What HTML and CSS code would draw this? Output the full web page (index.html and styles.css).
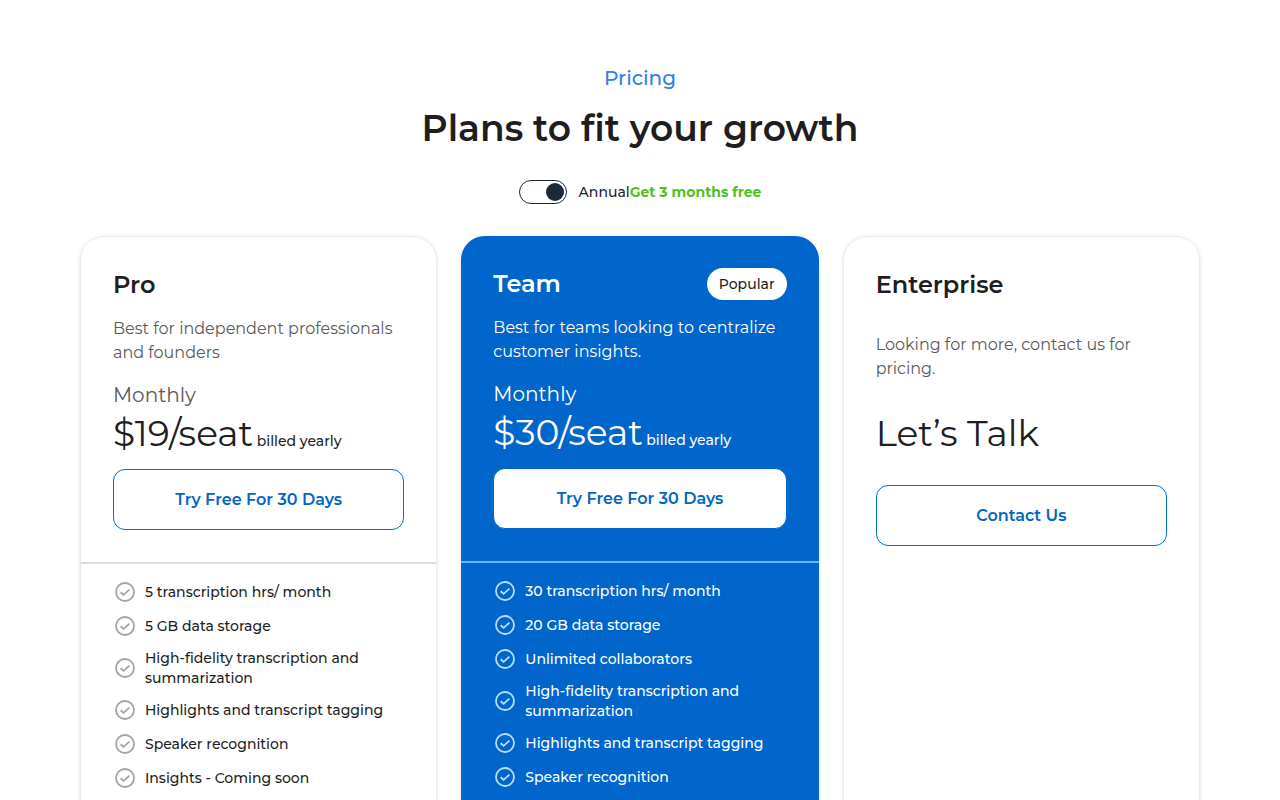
FILE: index.html
```html
<!DOCTYPE html>
<html lang="en">
<head>
    <meta charset="UTF-8">
    <meta name="viewport" content="width=device-width, initial-scale=1.0">
    <title>Pricing</title>
    <link rel="stylesheet" href="styles.css">
</head>
<body>
    <!-- check icon shared by all the feature lists -->
    <svg class="sprite" aria-hidden="true">
        <symbol id="check" viewBox="0 0 24 24">
            <circle cx="12" cy="12" r="9" />
            <path d="M7.6 12.2l3 2.6 5.8-5.2" />
        </symbol>
    </svg>

    <main class="pricing">
        <header class="heading">
            <p class="eyebrow">Pricing</p>
            <h1>Plans to fit your growth</h1>
            <div class="billing">
                <input type="checkbox" class="switch" id="annual" checked>
                <label for="annual">Annual<span class="offer">Get 3 months free</span></label>
            </div>
        </header>

        <div class="plans">
            <section class="plan">
                <div class="plan-top">
                    <div class="plan-name">
                        <h2>Pro</h2>
                    </div>
                    <p class="desc">Best for independent professionals and founders</p>
                    <p class="period">Monthly</p>
                    <p class="price">$19/seat <span class="billed">billed yearly</span></p>
                    <button type="button" class="btn">Try Free For 30 Days</button>
                </div>
                <ul class="features">
                    <li><svg class="icon"><use href="#check" /></svg>5 transcription hrs/ month</li>
                    <li><svg class="icon"><use href="#check" /></svg>5 GB data storage</li>
                    <li><svg class="icon"><use href="#check" /></svg>High-fidelity transcription and summarization</li>
                    <li><svg class="icon"><use href="#check" /></svg>Highlights and transcript tagging</li>
                    <li><svg class="icon"><use href="#check" /></svg>Speaker recognition</li>
                    <li><svg class="icon"><use href="#check" /></svg>Insights - Coming soon</li>
                </ul>
            </section>

            <section class="plan plan-team">
                <div class="plan-top">
                    <div class="plan-name">
                        <h2>Team</h2>
                        <span class="badge">Popular</span>
                    </div>
                    <p class="desc">Best for teams looking to centralize customer insights.</p>
                    <p class="period">Monthly</p>
                    <p class="price">$30/seat <span class="billed">billed yearly</span></p>
                    <button type="button" class="btn">Try Free For 30 Days</button>
                </div>
                <ul class="features">
                    <li><svg class="icon"><use href="#check" /></svg>30 transcription hrs/ month</li>
                    <li><svg class="icon"><use href="#check" /></svg>20 GB data storage</li>
                    <li><svg class="icon"><use href="#check" /></svg>Unlimited collaborators</li>
                    <li><svg class="icon"><use href="#check" /></svg>High-fidelity transcription and summarization</li>
                    <li><svg class="icon"><use href="#check" /></svg>Highlights and transcript tagging</li>
                    <li><svg class="icon"><use href="#check" /></svg>Speaker recognition</li>
                </ul>
            </section>

            <section class="plan plan-enterprise">
                <div class="plan-top">
                    <div class="plan-name">
                        <h2>Enterprise</h2>
                    </div>
                    <p class="desc">Looking for more, contact us for pricing.</p>
                    <p class="price">Let’s Talk</p>
                    <button type="button" class="btn">Contact Us</button>
                </div>
            </section>
        </div>
    </main>
</body>
</html>
```

FILE: styles.css
```css
* {
    box-sizing: border-box;
}
body {
    margin: 0;
    font-family: Montserrat, Inter, sans-serif;
    color: #1e1e1e;
    background-color: white;
}
h1, h2, p, ul {
    margin: 0;
    padding: 0;
}
.sprite {
    display: none;
}
.pricing {
    max-width: 1184px;
    margin: 0 auto;
    padding: 64px 32px 0;
}

/* heading */
.heading {
    display: flex;
    flex-direction: column;
    align-items: center;
    text-align: center;
}
.eyebrow {
    font-size: 20px;
    line-height: 28px;
    font-weight: 500;
    color: #2f80ed;
}
h1 {
    margin-top: 12px;
    font-size: 36px;
    line-height: 48px;
    font-weight: 600;
}
.billing {
    display: flex;
    align-items: center;
    gap: 12px;
    margin: 28px 0 32px;
    font-size: 14px;
    line-height: 24px;
    font-weight: 500;
}
.offer {
    font-weight: 700;
    color: #52c01a;
}
.switch {
    appearance: none;
    display: flex;
    width: 48px;
    height: 24px;
    margin: 0;
    padding: 2px;
    border: 1px solid #1c2938;
    border-radius: 12px;
    cursor: pointer;
}
.switch::before {
    content: "";
    width: 18px;
    height: 18px;
    border-radius: 50%;
    background-color: #1c2938;
}
.switch:checked {
    justify-content: flex-end;
}

/* plans */
.plans {
    display: grid;
    grid-template-columns: repeat(3, 1fr);
    gap: 24px;
}
.plan {
    border: 1px solid #ebebeb;
    border-radius: 24px;
    box-shadow: 0 1px 4px rgba(0, 0, 0, 0.12);
}
.plan-top {
    padding: 32px;
}
.plan-name {
    display: flex;
    justify-content: space-between;
    align-items: center;
    height: 32px;
}
h2 {
    font-size: 24px;
    line-height: 32px;
    font-weight: 600;
}
.desc {
    margin-top: 16px;
    font-size: 16px;
    line-height: 24px;
    color: #5a5a5a;
}
.period {
    margin-top: 16px;
    font-size: 20px;
    line-height: 28px;
    color: #5a5a5a;
}
.price {
    font-size: 36px;
    line-height: 48px;
    white-space: nowrap;
}
.billed {
    margin-left: -6px;
    font-size: 14px;
    font-weight: 500;
}
.btn {
    display: block;
    width: 100%;
    height: 61px;
    margin-top: 4px;
    border: 1px solid #0070c0;
    border-radius: 12px;
    background-color: white;
    font: inherit;
    font-size: 16px;
    font-weight: 600;
    color: #0066c3;
    cursor: pointer;
}
.btn:hover {
    background-color: #eef6ff;
}
.features {
    display: flex;
    flex-direction: column;
    gap: 10px;
    padding: 16px 32px 32px;
    border-top: 2px solid #dcdcdc;
    list-style: none;
}
.features li {
    display: flex;
    align-items: center;
    gap: 8px;
    min-height: 24px;
    font-size: 14px;
    line-height: 20px;
    font-weight: 500;
}
.icon {
    flex: none;
    width: 24px;
    height: 24px;
    fill: none;
    stroke: #a3a3a3;
    stroke-width: 1.8;
}

/* team plan */
.plan-team {
    border: none;
    background-color: #0066cc;
    color: white;
}
.plan-team .desc,
.plan-team .period {
    color: white;
}
.plan-team .btn {
    border-color: #0066cc;
}
.plan-team .features {
    border-color: #6db3f2;
}
.plan-team .icon {
    stroke: #b3dcff;
}
.badge {
    padding: 0 12px;
    border-radius: 16px;
    background-color: white;
    font-size: 14px;
    line-height: 32px;
    font-weight: 500;
    color: #1e1e1e;
}

/* enterprise plan */
.plan-enterprise .desc {
    margin-top: 32px;
}
.plan-enterprise .price {
    margin-top: 28px;
}
.plan-enterprise .btn {
    margin-top: 28px;
}
```
